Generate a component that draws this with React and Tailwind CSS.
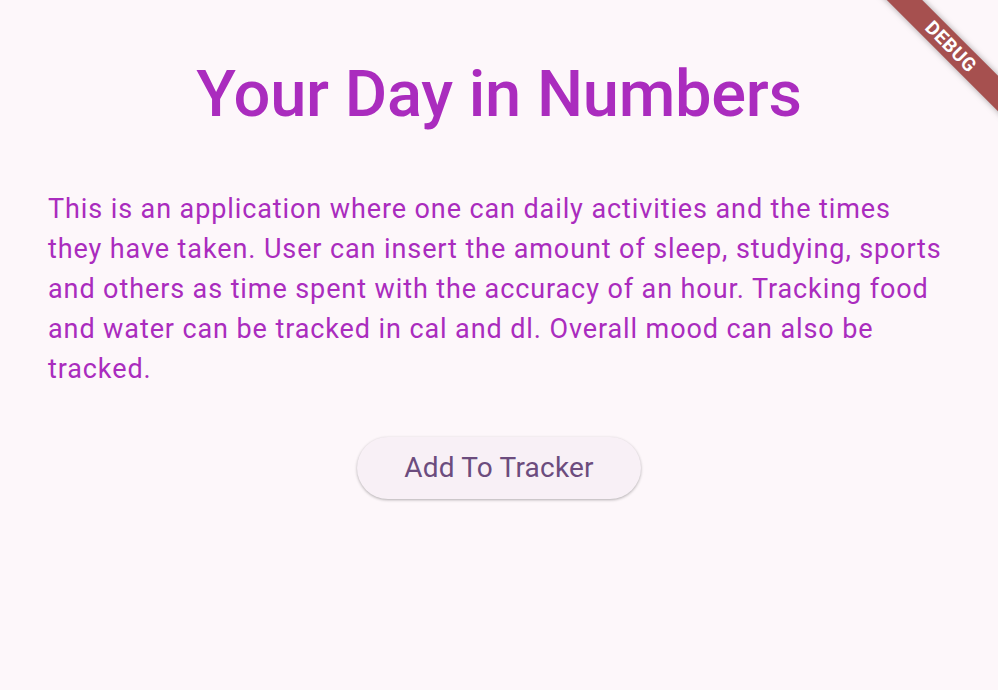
import React from 'react';

const App = () => {
  return (
    <div
      className="relative w-[998px] h-[690px] overflow-hidden bg-[#fdf7fa]"
      style={{ fontFamily: 'Roboto, "Noto Sans", sans-serif' }}
    >
      <div className="flex flex-col items-center px-12 pt-[54px]">
        <h1 className="text-[65px] leading-[80px] font-medium tracking-[-0.25px] text-[#aa2cbe] text-center">
          Your Day in Numbers
        </h1>
        <p className="mt-[55px] w-full text-[27px] leading-[40px] tracking-[0.9px] text-[#aa2cbe]">
          This is an application where one can daily activities and the times they have taken. User can
          insert the amount of sleep, studying, sports and others as time spent with the accuracy of an
          hour. Tracking food and water can be tracked in cal and dl. Overall mood can also be tracked.
        </p>
        <button className="mt-[48px] w-[284px] h-[62px] rounded-full bg-[#f8f0f6] text-[28px] leading-none tracking-[0.2px] text-[#6c4c7e] shadow-[0_1px_3px_rgba(0,0,0,0.3)] flex items-center justify-center">
          Add To Tracker
        </button>
      </div>

      <div className="absolute left-[851px] top-[34px] w-[200px] h-[25px] rotate-45 bg-[#a6504f] shadow-[0_0_6px_rgba(0,0,0,0.35)] flex items-center justify-center">
        <span className="text-white text-[19px] font-bold leading-none tracking-[0.5px]">DEBUG</span>
      </div>
    </div>
  );
};

export default App;
